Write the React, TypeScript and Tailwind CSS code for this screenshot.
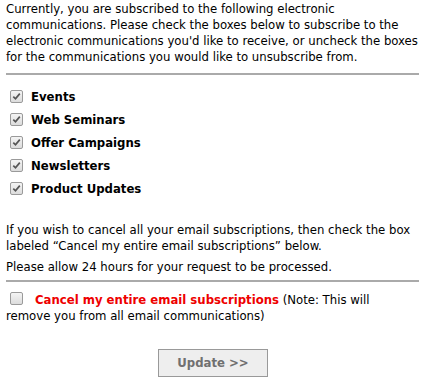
const topics = ['Events', 'Web Seminars', 'Offer Campaigns', 'Newsletters', 'Product Updates'];

function Box({ checked }: { checked: boolean }) {
  return (
    <span className="inline-flex h-[13px] w-[13px] shrink-0 items-center justify-center rounded-[2px] border border-[#9a9a9a] bg-gradient-to-b from-[#f4f4f4] to-[#dcdcdc]">
      {checked && (
        <svg width="9" height="9" viewBox="0 0 9 9">
          <path d="M1.3 4.6 L3.5 6.8 L7.8 1.6" fill="none" stroke="#555555" strokeWidth="1.7" />
        </svg>
      )}
    </span>
  );
}

export default function App() {
  return (
    <div
      className="w-[421px] bg-white pl-[6px] pt-[1px] text-[13px] leading-[16px] text-black"
      style={{ fontFamily: 'Tahoma, "DejaVu Sans Condensed", "DejaVu Sans", sans-serif' }}
    >
      <p>
        Currently, you are subscribed to the following electronic communications. Please check the boxes below to
        subscribe to the electronic communications you'd like to receive, or uncheck the boxes for the communications
        you would like to unsubscribe from.
      </p>
      <hr className="mt-[8px] mr-[2px] mb-[10px] border-t-2 border-[#aaaaaa]" />

      <ul>
        {topics.map((t) => (
          <li key={t} className="flex h-[23px] items-center gap-[8px] pl-[4px]">
            <Box checked />
            <span className="font-bold">{t}</span>
          </li>
        ))}
      </ul>

      <p className="mt-[22px] pr-[6px]">
        If you wish to cancel all your email subscriptions, then check the box labeled “Cancel my entire email
        subscriptions” below.
      </p>
      <p className="mt-[5px]">Please allow 24 hours for your request to be processed.</p>
      <hr className="mt-[5px] mr-[2px] mb-[10px] border-t-2 border-[#aaaaaa]" />

      <p className="pr-[6px]">
        <span className="inline-flex pl-[4px] pr-[12px] align-[-1px]">
          <Box checked={false} />
        </span>
        <span className="font-bold text-[#ee0000]">Cancel my entire email subscriptions</span> (Note: This will remove
        you from all email communications)
      </p>

      <div className="flex justify-center pt-[25px] pb-[11px] pr-[1px]">
        <button className="h-[28px] w-[110px] border border-[#999999] bg-[#eeeeee] font-bold text-[#707070]">
          Update &gt;&gt;
        </button>
      </div>
    </div>
  );
}
